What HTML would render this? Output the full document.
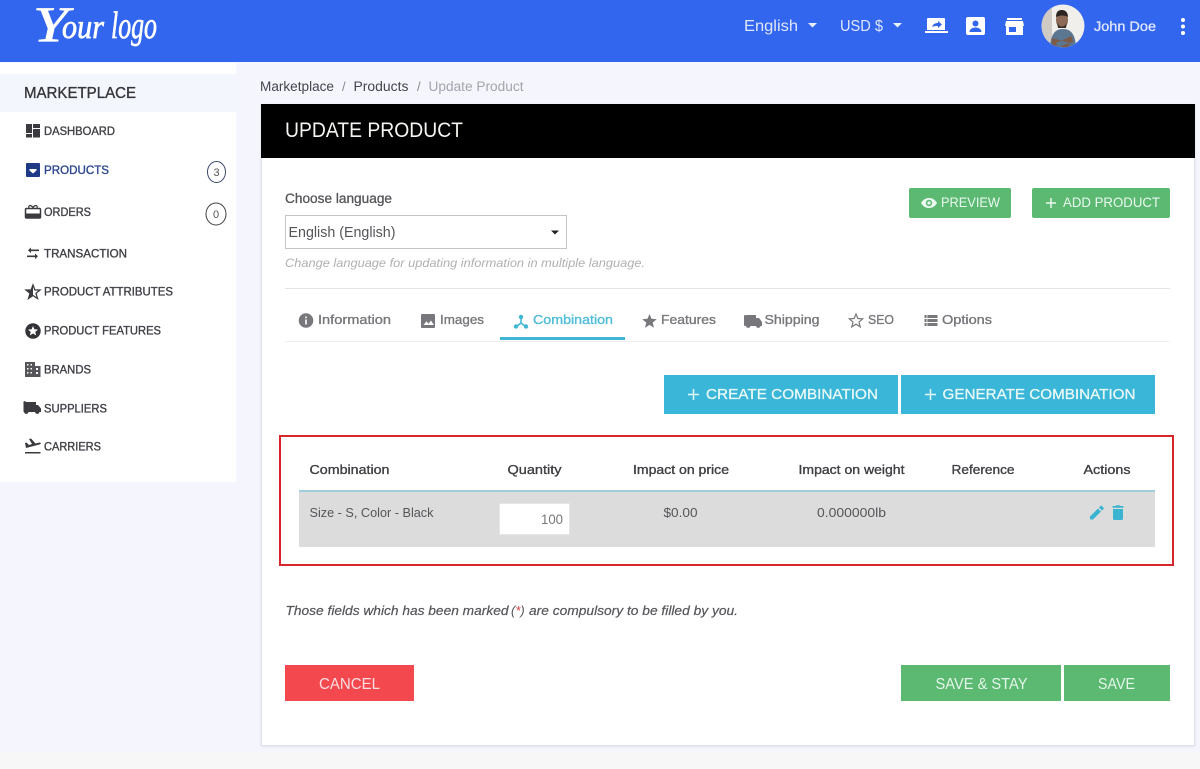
<!DOCTYPE html>
<html lang="en"><head><meta charset="utf-8"><title>Update Product</title>
<style>
html,body{margin:0;padding:0}
body{width:1200px;height:769px;overflow:hidden;position:relative;background:#f5f6fd;font-family:"Liberation Sans",sans-serif}
.b{position:absolute;box-sizing:border-box}
svg{position:absolute;left:0;top:0}
text{font-family:"Liberation Sans",sans-serif}
.nav{font-size:11.5px;fill:#3f3f46;stroke:#3f3f46;stroke-width:.35px}
.tab{font-size:13px;fill:#77777c;stroke:#77777c;stroke-width:.35px}
.th{font-size:13px;fill:#3f3f44;stroke:#3f3f44;stroke-width:.35px}
.td{font-size:12.5px;fill:#55555a}
.btn{fill:#e9f8f2;font-size:15px}
</style></head><body>
<div class="b" style="left:0;top:752px;width:1200px;height:17px;background:#f7f7f8"></div>
<div class="b" style="left:0;top:0;width:1200px;height:62px;background:#3366ee"></div>
<div class="b" style="left:0;top:63px;width:236px;height:419px;background:#fff"></div>
<div class="b" style="left:0;top:74px;width:236px;height:38px;background:#f4f6fd"></div>
<div class="b" style="left:261px;top:104px;width:934px;height:642px;background:#fff;border:1px solid #dfe0ea;box-shadow:0 1px 3px rgba(0,0,0,.08)"></div>
<div class="b" style="left:261px;top:104px;width:934px;height:54px;background:#000"></div>
<div class="b" style="left:285px;top:215px;width:282px;height:34px;background:#fff;border:1px solid #c4c4c4"></div>
<div class="b" style="left:285px;top:288px;width:885px;height:1px;background:#e3e3e3"></div>
<div class="b" style="left:285px;top:341px;width:885px;height:1px;background:#efefef"></div>
<div class="b" style="left:500px;top:337px;width:125px;height:2.5px;background:#3fb6d3"></div>
<div class="b" style="left:909px;top:188px;width:102px;height:30px;background:#5cb972;border-radius:2px"></div>
<div class="b" style="left:1032px;top:188px;width:138px;height:30px;background:#5cb972;border-radius:2px"></div>
<div class="b" style="left:664px;top:375px;width:234px;height:39px;background:#39b6d8"></div>
<div class="b" style="left:901px;top:375px;width:254px;height:39px;background:#39b6d8"></div>
<div class="b" style="left:279px;top:435px;width:895px;height:131px;border:2px solid #d8242b"></div>
<div class="b" style="left:299px;top:490px;width:856px;height:2px;background:#9fcfdf"></div>
<div class="b" style="left:299px;top:492px;width:856px;height:55px;background:#dcdcdc"></div>
<div class="b" style="left:499px;top:503px;width:71px;height:32px;background:#fff;border:1px solid #e6e6e6"></div>
<div class="b" style="left:285px;top:665px;width:129px;height:36px;background:#f4484f"></div>
<div class="b" style="left:901px;top:665px;width:160px;height:36px;background:#5cb972"></div>
<div class="b" style="left:1064px;top:665px;width:106px;height:36px;background:#5cb972"></div>

<svg width="1200" height="769" viewBox="0 0 1200 769" xmlns="http://www.w3.org/2000/svg">
<!-- logo -->
<g fill="#fff" stroke="#fff" stroke-width=".7" style="font-family:'Liberation Serif',serif;font-style:italic">
<text x="33" y="41" font-size="50" textLength="35" lengthAdjust="spacingAndGlyphs" style="font-family:'Liberation Serif',serif;font-style:italic">Y</text>
<text x="62" y="38" font-size="34" textLength="42" lengthAdjust="spacingAndGlyphs" style="font-family:'Liberation Serif',serif;font-style:italic">our</text>
<text x="111" y="38" font-size="38" textLength="46" lengthAdjust="spacingAndGlyphs" style="font-family:'Liberation Serif',serif;font-style:italic">logo</text>
</g>
<!-- header right -->
<text x="744" y="31" font-size="16" fill="#dfe7fd" textLength="54" lengthAdjust="spacingAndGlyphs">English</text>
<path d="M808 23h9l-4.500 4.500z" fill="#eaf0ff"/>
<text x="840" y="31" font-size="16" fill="#dfe7fd" textLength="43" lengthAdjust="spacingAndGlyphs">USD $</text>
<path d="M893 23h9l-4.500 4.500z" fill="#eaf0ff"/>
<path d="M928 18h16a1 1 0 0 1 1 1v11h-18V19a1 1 0 0 1 1-1zM925 31h23v2h-23z" fill="#fff"/>
<path d="M932 27c1-3 3-4 6-4v-2l4 3.500-4 3.500v-2c-2 0-4 0-6 1z" fill="#3366ee"/>
<path d="M968 17h15a2 2 0 0 1 2 2v14a2 2 0 0 1-2 2h-15a2 2 0 0 1-2-2V19a2 2 0 0 1 2-2z" fill="#fff"/>
<circle cx="975.500" cy="23.500" r="3" fill="#3366ee"/><path d="M969.500 32c0-3 3-4.500 6-4.500s6 1.500 6 4.500z" fill="#3366ee"/>
<path d="M1007 18h15v2h-15zM1006 21h17l1 5h-1v9h-17v-9h-1zM1009 27v5h7v-5z" fill="#fff"/>
<!-- avatar -->
<circle cx="1063" cy="26" r="21.500" fill="#f0efec"/>
<clipPath id="av"><circle cx="1063" cy="26" r="21.500"/></clipPath>
<g clip-path="url(#av)">
<rect x="1042" y="4" width="10" height="44" fill="#cfcac4"/>
<path d="M1050 50c0-14 4-21 13-21s13 7 13 21z" fill="#5b7691"/>
<path d="M1052 38l18 5-2 5-16-3zM1072 36l-16 7 2 4 15-5z" fill="#7d5b47"/>
<ellipse cx="1062" cy="20" rx="6" ry="8" fill="#8c6a55"/>
<path d="M1056 17c0-6 3-7 6-7s6 2 6 7c-3-2-8-2-12 0z" fill="#2b2420"/>
<path d="M1057 22c2 6 8 6 10 0l-1 6h-8z" fill="#3b2e27"/>
</g>
<text x="1094" y="31" font-size="14" fill="#dfe7fd" stroke="#dfe7fd" stroke-width=".3" textLength="62" lengthAdjust="spacingAndGlyphs">John Doe</text>
<circle cx="1183" cy="20" r="2" fill="#fff"/><circle cx="1183" cy="26.500" r="2" fill="#fff"/><circle cx="1183" cy="33" r="2" fill="#fff"/>

<!-- sidebar -->
<text x="24" y="98" font-size="16" fill="#35353a" stroke="#35353a" stroke-width=".35" textLength="112" lengthAdjust="spacingAndGlyphs">MARKETPLACE</text>
<path d="M26 124h6v9h-6zM33 124h7v4h-7zM26 134h6v3.500h-6zM33 129h7v8.500h-7z" fill="#3b3b3f"/>
<text class="nav" x="44" y="135" textLength="71" lengthAdjust="spacingAndGlyphs">DASHBOARD</text>
<path d="M27 163h12a1 1 0 0 1 1 1v12a1 1 0 0 1-1 1H27a1 1 0 0 1-1-1v-12a1 1 0 0 1 1-1z" fill="#1e3a86"/><path d="M29.500 169h7v1.500l-3.500 3-3.500-3z" fill="#fff"/>
<text class="nav" x="44" y="174" textLength="65" lengthAdjust="spacingAndGlyphs" style="fill:#2c468f;stroke:#2c468f">PRODUCTS</text>
<ellipse cx="216.500" cy="172" rx="9" ry="10.500" fill="#fff" stroke="#3c4a6b"/>
<text x="216.500" y="176" font-size="11" text-anchor="middle" fill="#555">3</text>
<path d="M26.500 208.500h13a1 1 0 0 1 1 1v7.500a1 1 0 0 1-1 1h-13a1 1 0 0 1-1-1v-7.500a1 1 0 0 1 1-1z" fill="none" stroke="#3b3b3f" stroke-width="1.500"/><path d="M26 213.500h14v4.500H26z" fill="#3b3b3f"/><path d="M29 208c-1-3 2-3.500 4-.5 2-3 5-2.500 4 .5" fill="none" stroke="#3b3b3f" stroke-width="1.200"/>
<text class="nav" x="44" y="216" textLength="47" lengthAdjust="spacingAndGlyphs">ORDERS</text>
<ellipse cx="216" cy="214" rx="10" ry="11" fill="#fff" stroke="#3f3f46"/>
<text x="216" y="218" font-size="11" text-anchor="middle" fill="#555">0</text>
<path d="M31 249.500h8v1.600h-8v2l-3-2.800 3-2.800zM35 255.500h-8v1.600h8v2l3-2.800-3-2.800z" fill="#3b3b3f"/>
<text class="nav" x="44" y="257.500" textLength="83" lengthAdjust="spacingAndGlyphs">TRANSACTION</text>
<path d="M33 285l1.900 5H40l-4 3.300 1.500 5.200-4.500-3-4.500 3 1.500-5.200-4-3.300h5.100z" fill="none" stroke="#3b3b3f" stroke-width="1.300"/><path d="M33 285v10.500l-4.500 3 1.500-5.200-4-3.300h5.100z" fill="#3b3b3f"/>
<text class="nav" x="44" y="295.500" textLength="129" lengthAdjust="spacingAndGlyphs">PRODUCT ATTRIBUTES</text>
<circle cx="33" cy="331" r="7.700" fill="#333337"/><path d="M33 326l1.400 3.300 3.600.3-2.700 2.300.8 3.500-3.100-1.900-3.100 1.900.8-3.500-2.700-2.300 3.600-.3z" fill="#fff"/>
<text class="nav" x="44" y="334.500" textLength="117" lengthAdjust="spacingAndGlyphs">PRODUCT FEATURES</text>
<path d="M25 362h10v4h5.500v11H25z" fill="#55555a"/><path d="M27 364h1.500v1.500H27zM30.500 364H32v1.500h-1.500zM27 368h1.500v1.500H27zM30.500 368H32v1.500h-1.500zM27 372h1.500v1.500H27zM30.500 372H32v1.500h-1.500zM36 368h2v2h-2zM36 372h2v2h-2z" fill="#fff"/>
<text class="nav" x="44" y="373.500" textLength="47" lengthAdjust="spacingAndGlyphs">BRANDS</text>
<path d="M26 402h10v3h2l3 3.500v3.500h-1.500a2.300 2.300 0 0 1-4.500 0h-6.500a2.300 2.300 0 0 1-4.500 0a1 1 0 0 1-.5-1v-8a1 1 0 0 1 2.500-1z" fill="#3b3b3f"/>
<text class="nav" x="44" y="412.500" textLength="63" lengthAdjust="spacingAndGlyphs">SUPPLIERS</text>
<path d="M25 452h15.500v1.500H25zM26 448l-1-5 1.500-.5 2.500 2.500 3-1-3-5 2-.5 4.500 5 4-1c2 0 1.500 1.500 0 2z" fill="#3b3b3f"/>
<text class="nav" x="44" y="450.500" textLength="57" lengthAdjust="spacingAndGlyphs">CARRIERS</text>

<!-- breadcrumb -->
<text x="260" y="91" font-size="13.500" fill="#45454a" textLength="74" lengthAdjust="spacingAndGlyphs">Marketplace</text>
<text x="342" y="91" font-size="13" fill="#888">/</text>
<text x="353.500" y="91" font-size="13.500" fill="#45454a" textLength="55" lengthAdjust="spacingAndGlyphs">Products</text>
<text x="417" y="91" font-size="13" fill="#888">/</text>
<text x="428.500" y="91" font-size="13.500" fill="#a3a3a8" textLength="95" lengthAdjust="spacingAndGlyphs">Update Product</text>
<text x="285" y="137" font-size="21" fill="#f4f4f0" textLength="178" lengthAdjust="spacingAndGlyphs">UPDATE PRODUCT</text>

<!-- language -->
<text x="285" y="203" font-size="13.500" fill="#55555a" stroke="#55555a" stroke-width=".3" textLength="107" lengthAdjust="spacingAndGlyphs">Choose language</text>
<text x="288.500" y="237" font-size="14.500" fill="#55555a" textLength="107" lengthAdjust="spacingAndGlyphs">English (English)</text>
<path d="M551 230.500h8l-4 4z" fill="#222"/>
<text x="285" y="267" font-size="12" font-style="italic" fill="#b0b0b4" textLength="360" lengthAdjust="spacingAndGlyphs">Change language for updating information in multiple language.</text>

<!-- top buttons -->
<path d="M921 203c2-3.500 5-5 8-5s6 1.500 8 5c-2 3.500-5 5-8 5s-6-1.500-8-5z" fill="#eef9f2"/><circle cx="929" cy="203" r="3.200" fill="#5cb972"/><circle cx="929" cy="203" r="1.600" fill="#eef9f2"/>
<text x="941" y="207" font-size="14" fill="#e9f8ef" textLength="59" lengthAdjust="spacingAndGlyphs">PREVIEW</text>
<path d="M1046 203h10M1051 198v10" stroke="#e9f8ef" stroke-width="1.500" fill="none"/>
<text x="1063" y="207" font-size="14" fill="#e9f8ef" textLength="97" lengthAdjust="spacingAndGlyphs">ADD PRODUCT</text>

<!-- tabs -->
<circle cx="306" cy="320.500" r="7.300" fill="#77777c"/><path d="M305.200 319.500h1.600v5h-1.600zM305.200 316.500h1.600v1.700h-1.600z" fill="#fff"/>
<text class="tab" x="318" y="324" textLength="73" lengthAdjust="spacingAndGlyphs">Information</text>
<path d="M422 314h12a1 1 0 0 1 1 1v12a1 1 0 0 1-1 1h-12a1 1 0 0 1-1-1v-12a1 1 0 0 1 1-1z" fill="#77777c"/><path d="M423.500 325l3-3.800 2 2.500 2.500-3.200 3 4.500z" fill="#fff"/>
<text class="tab" x="440" y="324" textLength="44" lengthAdjust="spacingAndGlyphs">Images</text>
<path d="M521 318.500v4.500l-4.500 3.500M521 323l4.500 3.500" stroke="#3fb6d3" stroke-width="1.500" fill="none"/><circle cx="521" cy="317" r="2.200" fill="#3fb6d3"/><circle cx="516" cy="326.500" r="2.200" fill="#3fb6d3"/><circle cx="526" cy="326.500" r="2.200" fill="#3fb6d3"/>
<text class="tab" x="533" y="324" textLength="80" lengthAdjust="spacingAndGlyphs" style="fill:#4fbdd8;stroke:#4fbdd8">Combination</text>
<path d="M649.500 314l2 4.800 5.200.4-4 3.400 1.300 5.100-4.500-2.800-4.500 2.800 1.300-5.100-4-3.400 5.200-.4z" fill="#77777c"/>
<text class="tab" x="661" y="324" textLength="55" lengthAdjust="spacingAndGlyphs">Features</text>
<path d="M746 315h10v3h3l3 4v4h-1.500a2.300 2.300 0 0 1-4.500 0h-5.500a2.300 2.300 0 0 1-4.500 0H745a1 1 0 0 1-1-1v-9a1 1 0 0 1 2 0z" fill="#77777c"/>
<text class="tab" x="764.500" y="324" textLength="55" lengthAdjust="spacingAndGlyphs">Shipping</text>
<path d="M856 314l1.900 4.500 4.800.4-3.700 3.200 1.200 4.700-4.200-2.600-4.200 2.600 1.200-4.700-3.700-3.200 4.800-.4z" fill="none" stroke="#77777c" stroke-width="1.200"/>
<text class="tab" x="868" y="324" font-size="14" textLength="26" lengthAdjust="spacingAndGlyphs">SEO</text>
<path d="M924.500 315h13v3h-13zM924.500 319h13v3h-13zM924.500 323h13v3h-13z" fill="#77777c"/><path d="M927 315v11" stroke="#fff" stroke-width=".8"/>
<text class="tab" x="942" y="324" textLength="50" lengthAdjust="spacingAndGlyphs">Options</text>

<!-- combination buttons -->
<path d="M688 394.500h11M693.500 389v11" stroke="#e6f8fc" stroke-width="1.500" fill="none"/>
<text class="btn" x="706" y="399" textLength="172" lengthAdjust="spacingAndGlyphs" stroke="#e9f8fc" stroke-width=".3">CREATE COMBINATION</text>
<path d="M925 394.500h11M930.500 389v11" stroke="#e6f8fc" stroke-width="1.500" fill="none"/>
<text class="btn" x="942.500" y="399" textLength="193" lengthAdjust="spacingAndGlyphs" stroke="#e9f8fc" stroke-width=".3">GENERATE COMBINATION</text>

<!-- table -->
<text class="th" x="309.500" y="474" textLength="80" lengthAdjust="spacingAndGlyphs">Combination</text>
<text class="th" x="507.500" y="474" textLength="54" lengthAdjust="spacingAndGlyphs">Quantity</text>
<text class="th" x="633" y="474" textLength="96" lengthAdjust="spacingAndGlyphs">Impact on price</text>
<text class="th" x="798.500" y="474" textLength="106" lengthAdjust="spacingAndGlyphs">Impact on weight</text>
<text class="th" x="951.500" y="474" textLength="63" lengthAdjust="spacingAndGlyphs">Reference</text>
<text class="th" x="1083.500" y="474" textLength="47" lengthAdjust="spacingAndGlyphs">Actions</text>
<text class="td" x="309.500" y="517" textLength="124" lengthAdjust="spacingAndGlyphs">Size - S, Color - Black</text>
<text x="541" y="524" font-size="14" fill="#77777a" textLength="22" lengthAdjust="spacingAndGlyphs">100</text>
<text class="td" x="663.500" y="517" textLength="34" lengthAdjust="spacingAndGlyphs">$0.00</text>
<text class="td" x="817" y="517" textLength="69" lengthAdjust="spacingAndGlyphs">0.000000lb</text>
<path d="M1090 516.500v3h3l8-8-3-3zM1099 507.500l3 3 1.500-1.500a1 1 0 0 0 0-1.400l-1.600-1.600a1 1 0 0 0-1.400 0z" fill="#3bb4d2"/>
<path d="M1113 509h10v9.500a1.500 1.500 0 0 1-1.500 1.500h-7a1.500 1.500 0 0 1-1.500-1.500zM1112.500 506h3l.8-.8h3.400l.8.8h3v1.800h-11z" fill="#3bb4d2"/>

<!-- note -->
<text x="285.500" y="615" font-size="13" font-style="italic" fill="#55555a" stroke="#55555a" stroke-width=".2" textLength="223" lengthAdjust="spacingAndGlyphs">Those fields which has been marked</text>
<text x="511" y="615" font-size="13" font-style="italic" fill="#55555a">(<tspan fill="#e23b3b">*</tspan>)</text>
<text x="529" y="615" font-size="13" font-style="italic" fill="#55555a" stroke="#55555a" stroke-width=".2" textLength="209" lengthAdjust="spacingAndGlyphs">are compulsory to be filled by you.</text>

<!-- footer buttons -->
<text x="319" y="689" font-size="15.500" fill="#fbdde0" textLength="61" lengthAdjust="spacingAndGlyphs">CANCEL</text>
<text x="935.500" y="689" font-size="15.500" fill="#e4f6ea" textLength="92" lengthAdjust="spacingAndGlyphs">SAVE &amp; STAY</text>
<text x="1098" y="689" font-size="15.500" fill="#e4f6ea" textLength="37" lengthAdjust="spacingAndGlyphs">SAVE</text>
</svg>
</body></html>
